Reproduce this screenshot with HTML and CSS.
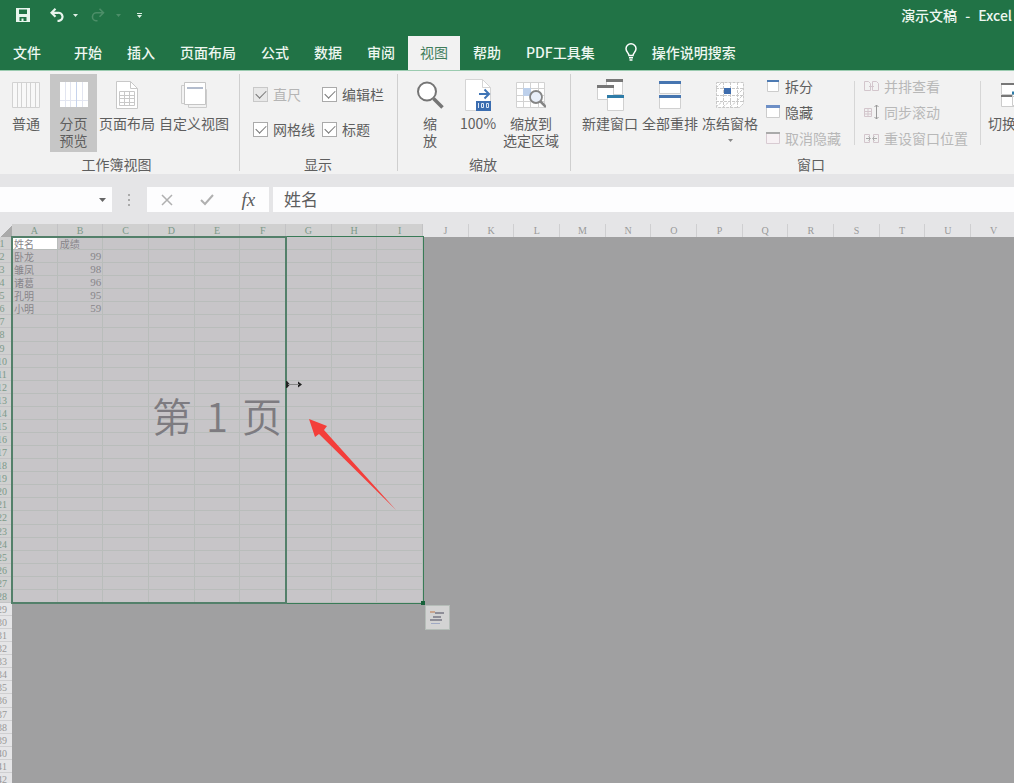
FILE: index.html
```html
<!DOCTYPE html>
<html lang="zh-CN">
<head>
<meta charset="utf-8">
<title>演示文稿 - Excel</title>
<link rel="stylesheet" href="styles.css">
</head>
<body>
<header class="top">
  <div class="titlebar">
    <div class="quick">
      <button class="q" aria-label="保存"><svg width="14" height="14" viewBox="0 0 14 14"><path fill="#e8f5ed" fill-rule="evenodd" d="M0 0h14v14H0zM3 1.500v4.500h8V1.500zM3.500 9v4h2v-2.500h2V13h3V9z"/></svg></button>
      <button class="q undo" aria-label="撤消"><svg width="14" height="14" viewBox="0 0 14 14" fill="none" stroke="#e8f5ed" stroke-width="2.200"><path d="M5.500 0.800L1.500 4.800l4 4M1.800 4.800H8a4 4 0 0 1 1 8H7.500"/></svg></button>
      <button class="q" aria-label="撤消选项"><svg width="5" height="3"><path fill="#dff0e6" d="M0 0h5L2.500 3z"/></svg></button>
      <button class="q redo" aria-label="恢复" disabled><svg width="14" height="14" viewBox="0 0 14 14" fill="none" stroke="#4c8e68" stroke-width="1.600"><path d="M8.500 0.800l4 4-4 4M12 4.800H6a4 4 0 0 0-1 8h1.500"/></svg></button>
      <button class="q" aria-label="恢复选项" disabled><svg width="5" height="3"><path fill="#4c8e68" d="M0 0h5L2.500 3z"/></svg></button>
      <button class="q custom" aria-label="自定义快速访问工具栏"><svg width="5" height="5"><path fill="#dff0e6" d="M0 0h5v1H0zM0 2h5L2.500 5z"/></svg></button>
    </div>
    <div class="doc"><span>演示文稿</span><span>-</span><span>Excel</span></div>
  </div>
  <nav class="tabs">
    <button class="tab file">文件</button>
    <button class="tab">开始</button>
    <button class="tab">插入</button>
    <button class="tab">页面布局</button>
    <button class="tab">公式</button>
    <button class="tab">数据</button>
    <button class="tab">审阅</button>
    <button class="tab active">视图</button>
    <button class="tab">帮助</button>
    <button class="tab">PDF工具集</button>
    <button class="tab tell"><svg width="12" height="18" viewBox="0 0 12 18" fill="none" stroke="#fff" stroke-width="1.500"><path d="M4 12.500C4 10 1 9 1 5.800a5 5 0 0 1 10 0C11 9 8 10 8 12.500zM4 14.800h4M4.500 17h3"/></svg><span>操作说明搜索</span></button>
  </nav>
</header>

<main class="ribbon">
  <section class="group views">
    <div class="tools">
      <button class="big w48"><span class="ico"><svg width="30" height="28" viewBox="0 0 30 28"><path fill="#f8f8f8" stroke="#d2d2d2" d="M1.500 1.500h27v25h-27zM6.500 2v24M10.500 2v24M15.500 2v24M19.500 2v24M24.500 2v24"/></svg></span>普通</button>
      <button class="big w47 pressed"><span class="ico"><svg width="30" height="28" viewBox="0 0 30 28"><path fill="#fff" d="M1 1h28v25H1z"/><path fill="none" stroke="#e2e5f0" d="M6.500 1v25M11.500 1v25M23.500 1v25M1 19.500h28"/><path stroke="#c6d3ec" d="M17.500 1v25"/></svg></span>分页<br>预览</button>
      <button class="big w60"><span class="ico"><svg width="24" height="30" viewBox="0 0 24 30"><path fill="#fff" stroke="#c8c8c8" d="M1.500 1.500h14l7 7v20h-21z"/><path fill="none" stroke="#c8c8c8" d="M15.500 1.500v7h7M4.500 11.500h15v14h-15zM4.500 15.500h15M4.500 18.500h15M4.500 22.500h15M9.500 11v15M14.500 11v15"/></svg></span>页面布局</button>
      <button class="big w74"><span class="ico"><svg width="28" height="28" viewBox="0 0 28 28"><path fill="#f2f2f2" stroke="#ccc" d="M1.500 4.500h20v18h-20zM8.500 8.500h18v18h-18z"/><path fill="#fff" stroke="#c5c5c5" d="M4.500 1.500h21v22h-21z"/><path stroke="#b3bccd" stroke-width="2" d="M7 7h16"/></svg></span>自定义视图</button>
    </div>
    <h2 class="name">工作簿视图</h2>
  </section>
  <section class="group show">
    <div class="tools checks">
      <label class="check off"><input type="checkbox" checked disabled>直尺</label>
      <label class="check"><input type="checkbox" checked>编辑栏</label>
      <label class="check"><input type="checkbox" checked>网格线</label>
      <label class="check"><input type="checkbox" checked>标题</label>
    </div>
    <h2 class="name">显示</h2>
  </section>
  <section class="group zoom">
    <div class="tools">
      <button class="big w48"><span class="ico"><svg width="28" height="30" viewBox="0 0 28 30"><path stroke="#757575" stroke-width="3.500" d="M17.500 18.500l9 9"/><circle cx="11" cy="11.500" r="9" fill="#fff" stroke="#757575" stroke-width="2"/></svg></span>缩<br>放</button>
      <button class="big w48"><span class="ico"><svg width="28" height="32" viewBox="0 0 28 32"><path fill="#fff" stroke="#d5d5d5" d="M1.500 .5h17l8 8v23h-25z"/><path fill="none" stroke="#d5d5d5" d="M18.500 .5v8h8"/><path fill="none" stroke="#3f74b5" stroke-width="2" d="M15 15h10M20.500 10.500l4.500 4.500-4.500 4.500"/><path fill="#3b6db0" d="M12 22h15v10H12z"/><path fill="none" stroke="#dbe6f5" d="M14.500 24v5M17.500 24.500h2v4h-2zM22.500 24.500h2v4h-2z"/></svg></span>100%</button>
      <button class="big w58"><span class="ico"><svg width="30" height="28" viewBox="0 0 30 28"><path fill="#fff" stroke="#d2d2d2" d="M.5 1.500h28v25H.5zM7.500 1v26M14.500 1v26M22.500 1v26M0 7.500h29M0 14.500h29M0 20.500h29"/><path fill="#bdd0eb" d="M7 7h8v8H7z"/><path stroke="#858585" stroke-width="2.500" d="M24 20l6 6"/><circle cx="20" cy="16" r="6" fill="#e9eff9" stroke="#858585" stroke-width="1.800"/></svg></span>缩放到<br>选定区域</button>
    </div>
    <h2 class="name">缩放</h2>
  </section>
  <section class="group window">
    <div class="tools">
      <button class="big w60"><span class="ico"><svg width="28" height="32" viewBox="0 0 28 32"><g fill="#fff" stroke="#d0d0d0"><path d="M10.500 1.500h16v14h-16z"/><path d="M1.500 7.500h16v13h-16z"/></g><path stroke="#777" stroke-width="3" d="M10 1.500h17M1 7.500h17"/><path fill="#fff" stroke="#d0d0d0" d="M11.500 17.500h16v14h-16z"/><path stroke="#2e7ca8" stroke-width="3" d="M11 17.500h17"/></svg></span>新建窗口</button>
      <button class="big w60"><span class="ico"><svg width="22" height="28" viewBox="0 0 22 28"><path fill="#fff" stroke="#d0d0d0" d="M.5 1.500h21v11H.5zM.5 15.500h21v12H.5z"/><path stroke="#4675b0" stroke-width="3" d="M0 1.500h22M0 15.500h22"/></svg></span>全部重排</button>
      <button class="big w60"><span class="ico"><svg width="30" height="28" viewBox="0 0 30 28"><path fill="#fff" stroke="#c9c9c9" stroke-dasharray="3 1" d="M1.500 1.500h27v21l-4 4h-23zM8.500 1v26M15.500 1v26M22.500 1v26M1 7.500h28M1 14.500h28M1 20.500h28M1 7l6-6M1 26l7-6M8 26l7-6M15 26l7-6M22 14l7-7M22 20l7-7"/><path fill="#3f6dae" d="M9 7h7v6H9z"/></svg></span>冻结窗格<svg class="caret" width="5" height="3"><path fill="#888" d="M0 0h5L2.500 3z"/></svg></button>
      <div class="list first">
        <button class="row"><svg width="14" height="14"><path fill="#fff" stroke="#ccc" d="M1.500 1.500h11v11h-11z"/><path stroke="#4d7ab2" stroke-width="2" d="M1 2h12"/></svg>拆分</button>
        <button class="row"><svg width="14" height="14"><path fill="#fff" stroke="#ccc" d="M.5 1.500h13v11H.5z"/><path stroke="#6d8fc6" stroke-width="3" d="M0 1.500h14"/></svg>隐藏</button>
        <button class="row" disabled><svg width="14" height="14"><path fill="#f7f1f4" stroke="#d8cbd2" d="M.5 1.500h13v11H.5z"/><path stroke="#aaa" stroke-width="2" d="M0 2h14"/></svg>取消隐藏</button>
      </div>
      <div class="list second">
        <button class="row" disabled><svg width="15" height="14" fill="none" stroke="#d3c6cc"><path d="M.5 2.500h4l2 2v7h-6zM8.500 2.500h4l2 2v7h-6zM5 7.500h5"/></svg>并排查看</button>
        <button class="row" disabled><svg width="15" height="16" fill="none" stroke="#d3c6cc"><path d="M.5 4.500h7v8h-7zM1 7.500h7M1 10h7M4 5v7"/><path stroke="#999" d="M12.500 1v14M10.500 3l2-2 2 2M10.500 13l2 2 2-2"/></svg>同步滚动</button>
        <button class="row" disabled><svg width="15" height="14" fill="none" stroke="#d3c6cc"><path d="M.5 3.500h5v8h-5zM9.500 3.500h5v8h-5z"/><path stroke="#aaa" d="M2 7.500h4M9 7.500h4M4.500 5.500l2 2-2 2M10.500 5.500l-2 2 2 2"/></svg>重设窗口位置</button>
      </div>
      <button class="big switch"><span class="ico"><svg width="30" height="30" viewBox="0 0 30 30"><path fill="#fff" stroke="#ccc" d="M.5 4.500h15v10H.5zM.5 16.500h15v10H.5zM11.500 13.500h16v12h-16z"/><path stroke="#777" stroke-width="2" d="M0 4h16M0 16h11"/><path stroke="#2e7ca8" stroke-width="3" d="M11 13h17"/></svg></span>切换窗口</button>
    </div>
    <h2 class="name">窗口</h2>
  </section>
</main>

<div class="formula">
  <div class="namebox"><input type="text" aria-label="名称框"><button aria-label="名称列表"><svg width="7" height="4"><path fill="#666" d="M0 0h7L3.500 4z"/></svg></button></div>
  <svg class="grip" width="3" height="14" fill="#aaa"><path d="M0 1h2v2H0zM0 6h2v2H0zM0 11h2v2H0z"/></svg>
  <div class="actions">
    <button aria-label="取消"><svg width="12" height="12" fill="none" stroke="#b0b0b0" stroke-width="1.500"><path d="M1 1l10 10M11 1L1 11"/></svg></button>
    <button aria-label="输入"><svg width="14" height="12" fill="none" stroke="#b0b0b0" stroke-width="2"><path d="M1 6l4 4 8-9"/></svg></button>
    <button class="fx" aria-label="插入函数">fx</button>
  </div>
  <input class="value" type="text" aria-label="编辑栏" value="姓名">
</div>

<div class="sheet">
  <table class="grid" id="grid"></table>
  <div class="area selection"></div>
  <div class="area page"><span>第</span><span>1</span><span>页</span></div>
  <svg class="marks" width="130" height="150" viewBox="280 370 130 150"><path d="M286 381h1l3 3.500-3 3.500h-1zM298 381.500l4 3-4 3z" fill="#222"/><path d="M288 384.500h11" stroke="#888"/><path fill="#f43e3a" d="M309 419l18 7-3 4 72 80-77-76-4 3z"/></svg>
  <button class="quickview" aria-label="快速分析"><svg width="15" height="14" fill="none"><path stroke="#c9a58e" stroke-width="2" d="M0 1h5"/><path stroke="#8e8e98" stroke-width="2" d="M5 2h9M3 6h8M0 9h12"/><path stroke="#9fa9c4" d="M1 12.500h9"/></svg></button>
</div>
<script src="grid.js"></script>
</body>
</html>
```

FILE: styles.css
```css
* { box-sizing: border-box; }
body {
  margin: 0; height: 100vh; display: flex; flex-direction: column; overflow: hidden;
  background: #e5e5e7; color: #5e5e5e;
  font: 14px/17px "Noto Sans CJK SC", "Noto Sans", sans-serif;
}
button, input { font: inherit; color: inherit; border: 0; padding: 0; margin: 0; background: none; }
svg { display: block; flex: none; }

.top { background: #217346; color: #eef7f1; border-bottom: 1px solid #9bcbb0; }
.titlebar { height: 36px; display: flex; justify-content: space-between; padding: 0 2px 6px 16px; }
.quick { display: flex; align-items: center; }
.undo { margin: 0 9px 0 20px; }
.redo { margin: 0 11px 0 13px; }
.custom { margin-left: 16px; }
.doc { display: flex; align-items: center; gap: 8px; font-weight: 500; }
.tabs { display: flex; gap: 1px; height: 34px; padding-left: 1px; }
.tab { padding: 0 12px 2px; font-weight: 500; white-space: nowrap; }
.file { margin-right: 8px; }
.active { background: #f2f2f2; color: #3f7d5b; font-weight: 400; }
.tell { display: flex; align-items: center; gap: 15px; margin-left: 5px; }

.ribbon { display: flex; height: 103px; padding: 3px 0; background: #f2f2f2; overflow: hidden; flex: none; }
.group { flex: none; display: flex; flex-direction: column; border-right: 1px solid #cfcfcf; }
.tools { display: flex; flex: none; height: 81px; }
.name { margin: 0; font-size: 14px; font-weight: 400; line-height: 19px; text-align: center; }
.views { width: 240px; padding: 0 8px 0 2px; }
.show { width: 158px; padding: 0 14px 0 13px; }
.zoom { width: 173px; padding: 0 10px 0 8px; }
.window { width: 480px; padding: 0 8px 0 9px; }
.big { flex: none; display: flex; flex-direction: column; align-items: center; height: 78px; padding-top: 5px; white-space: nowrap; text-align: center; }
.big .ico { height: 32px; margin-bottom: 4px; display: flex; align-items: center; }
.caret { margin-top: 7px; }
.w47 { width: 47px; } .w48 { width: 48px; } .w58 { width: 58px; } .w60 { width: 60px; } .w74 { width: 74px; }
.pressed { background: #c6c6c6; }
.checks { display: grid; grid-template-columns: 69px 1fr; grid-template-rows: 35px 35px; padding-top: 3px; }
.check { display: flex; align-items: center; gap: 5px; white-space: nowrap; }
.check input {
  appearance: none; width: 15px; height: 15px; border: 1px solid #aaa; background: #fff;
  display: grid; place-items: center;
}
.check input:checked::after { content: ""; width: 9px; height: 5px; margin-bottom: 3px; border: solid #777; border-width: 0 0 1px 1px; transform: rotate(-45deg); }
.off { color: #b5b5b5; }
.off input { background: #e8e8e8; border-color: #c8c8c8; }
.list { flex: none; display: flex; flex-direction: column; height: 78px; }
.row { height: 26px; display: flex; align-items: center; gap: 5px; padding-bottom: 2px; white-space: nowrap; }
.row:disabled { color: #b8b8b8; }
.first { width: 88px; margin-left: 6px; }
.second {
  width: 127px; padding-left: 10px;
  background: linear-gradient(#d6d6d6, #d6d6d6) left / 1px 64px no-repeat, linear-gradient(#d6d6d6, #d6d6d6) right / 1px 64px no-repeat;
}
.switch { width: 70px; }

.formula { display: flex; flex: none; align-items: stretch; height: 50px; padding: 13px 0 12px; }
.namebox { width: 112px; background: #fdfdfe; display: flex; }
.namebox input { flex: 1; min-width: 0; }
.namebox button { padding: 0 6px; }
.grip { align-self: center; margin: 0 16px; }
.actions { display: flex; width: 122px; background: #fdfdfe; justify-content: space-around; align-items: center; margin-right: 4px; }
.fx { font: italic 19px/20px "Liberation Serif", serif; }
.value { flex: 1; min-width: 0; background: #fdfdfe; padding: 0 11px 2px; font-size: 17px; }

.sheet { flex: 1; min-height: 0; position: relative; overflow: hidden; background: #a0a0a1; }
.grid { margin-left: -8px; width: 1025px; table-layout: fixed; border-collapse: separate; border-spacing: 0; font-size: 10px; line-height: 11px; color: #88868a; }
.grid th, .grid td { padding: 0; height: 13px; white-space: nowrap; overflow: hidden; }
.grid .tall th { height: 14px; }
.grid th { background: #e5e5e7; color: #999; font: 10px/11px "Liberation Serif", serif; border: solid #cfcfd1; border-width: 0 1px 0 0; }
.grid .rowhead { border-width: 0 0 1px; }
.grid .corner { width: 20px; background: linear-gradient(135deg, #e5e5e7 65%, #aaa 65%); border: 0; }
.grid .on { background: #d0d0d0; color: #7d9a8a; border-color: #c3c3c5; }
.grid .cell { background: #c7c5c8; border: solid #b9bdbb; border-width: 0 1px 1px 0; text-align: left; padding-left: 2px; }
.grid .num { text-align: right; padding-right: 1px; font-family: "Liberation Serif", serif; font-size: 11px; }
.grid .current { background: #fff; }
.area { position: absolute; top: 12px; left: 11px; height: 368px; pointer-events: none; }
.selection { width: 413px; border: 1px solid #397b57; }
.selection::after { content: ""; position: absolute; right: -2px; bottom: -2px; width: 4px; height: 4px; background: #17613a; }
.page { width: 276px; border: 2px solid #53806a; display: flex; align-items: center; justify-content: flex-end; gap: 14px; padding: 0 3px 10px 0; font-size: 40px; line-height: 48px; font-weight: 350; color: #7d7b80; }
.marks { position: absolute; left: 280px; top: 146px; }
.quickview { position: absolute; left: 425px; top: 381px; width: 25px; height: 25px; display: grid; place-items: center; background: #d3d3d3; border: 1px solid #b5bdb8; }
```

FILE: grid.js
```js
const names = ["姓名", "卧龙", "雏凤", "诸葛", "孔明", "小明"];
const scores = ["成绩", "99", "98", "96", "95", "59"];
const table = document.getElementById("grid");
const columns = 22, rows = 42, usedColumns = 9, usedRows = 28;

function add(row, tag, text, cls) {
  const cell = document.createElement(tag);
  cell.textContent = text;
  cell.className = cls;
  row.appendChild(cell);
}

const head = table.insertRow();
add(head, "th", "", "corner");
for (let c = 0; c < columns; c++) {
  add(head, "th", String.fromCharCode(65 + c), c < usedColumns ? "on" : "");
}
for (let r = 0; r < rows; r++) {
  const row = table.insertRow();
  const used = r < usedRows;
  if (r % 14 === 7) row.className = "tall";
  add(row, "th", r + 1, used ? "rowhead on" : "rowhead");
  for (let c = 0; c < columns; c++) {
    const text = c === 0 ? names[r] : c === 1 ? scores[r] : "";
    let cls = used && c < usedColumns ? "cell" : "";
    if (c === 1 && r > 0 && used) cls += " num";
    if (c === 0 && r === 0) cls += " current";
    add(row, "td", text || "", cls);
  }
}
```
